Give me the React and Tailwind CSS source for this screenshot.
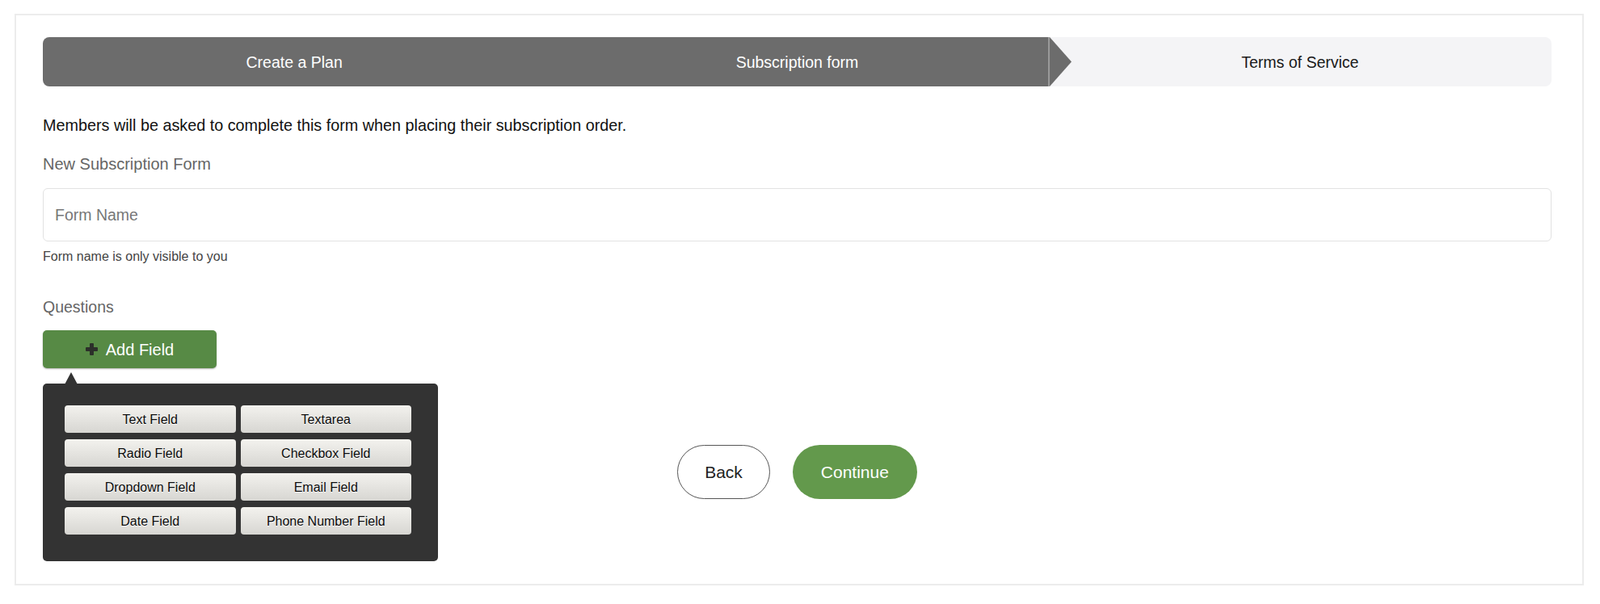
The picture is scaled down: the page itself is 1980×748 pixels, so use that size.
import React from "react";

const fields = [
  "Text Field",
  "Textarea",
  "Radio Field",
  "Checkbox Field",
  "Dropdown Field",
  "Email Field",
  "Date Field",
  "Phone Number Field",
];

export default function App() {
  return (
    <div className="bg-white w-[1980px] h-[748px] pt-[17px] pl-[18px] font-['Liberation_Sans',Arial,Helvetica,sans-serif]">
      <div className="w-[1942px] h-[708px] border-2 border-[#ececec] pl-[33px] pr-[38px] pt-[27px]">
        {/* Stepper */}
        <div className="flex h-[61px] rounded-[8px]">
          <div className="flex-1 flex items-center justify-center pt-[3px] bg-[#6c6c6c] rounded-l-[8px] text-white text-[19.5px]">
            Create a Plan
          </div>
          <div className="flex-1 relative flex items-center justify-center pt-[3px] bg-[#6c6c6c] text-white text-[19.5px]">
            Subscription form
            <svg
              className="absolute top-0 left-[calc(100%-1px)] z-10"
              width="30"
              height="61"
              viewBox="0 0 30 61"
            >
              <rect x="0" y="0" width="2" height="61" fill="#9a9a9a" />
              <polygon points="2,0 29,30.5 2,61" fill="#6c6c6c" />
            </svg>
          </div>
          <div className="flex-1 flex items-center justify-center pt-[3px] bg-[#f4f4f6] rounded-r-[8px] text-[#1a1a1a] text-[19.5px]">
            Terms of Service
          </div>
        </div>

        <p className="mt-[36px] text-[19.8px] leading-[24px] text-[#111]">
          Members will be asked to complete this form when placing their subscription order.
        </p>
        <p className="mt-[24px] text-[20px] leading-[24px] text-[#666]">New Subscription Form</p>

        <input
          readOnly
          placeholder="Form Name"
          className="mt-[18px] block w-full h-[66px] rounded-[6px] border border-[#e2e2e2] pl-[14px] text-[19.5px] outline-none placeholder:text-[#777]"
        />
        <p className="mt-[9px] text-[16px] leading-[20px] text-[#444]">Form name is only visible to you</p>

        <p className="mt-[40px] text-[19.5px] leading-[24px] text-[#666]">Questions</p>

        <div className="relative mt-[17px]">
          <button className="flex items-center justify-center gap-[10px] w-[215px] h-[47px] rounded-[5px] bg-[#578a45] shadow-[0_1px_2px_rgba(0,0,0,0.3)] text-white text-[20px]">
            <svg width="15" height="15" viewBox="0 0 15 15">
              <rect x="5" y="0" width="5" height="15" rx="1" fill="#2c2f2a" />
              <rect x="0" y="5" width="15" height="5" rx="1" fill="#2c2f2a" />
            </svg>
            Add Field
          </button>

          {/* Popover */}
          <div className="absolute left-0 top-[66px] z-20 w-[489px] h-[220px] rounded-[5px] bg-[#333333] pl-[27px] pt-[27px] pr-[33px] pb-[33px]">
            <svg className="absolute -top-[14px] left-[27px]" width="16" height="15" viewBox="0 0 16 15">
              <polygon points="8,0 16,15 0,15" fill="#333333" />
            </svg>
            <div className="grid grid-cols-2 gap-x-[6px] gap-y-[8px]">
              {fields.map((f) => (
                <div
                  key={f}
                  className="h-[34px] flex items-center justify-center pt-[1px] rounded-[4px] bg-linear-to-b from-[#f3f2ee] to-[#d7d6d2] text-[16px] text-[#0a0a0a] [text-shadow:0_1px_0_#ffffff]"
                >
                  {f}
                </div>
              ))}
            </div>
          </div>
        </div>

        <div className="mt-[95px] flex justify-center gap-[28px]">
          <button className="h-[67px] px-[33px] rounded-full border border-[#555] bg-white text-[21px] text-[#222]">
            Back
          </button>
          <button className="h-[67px] px-[35px] rounded-full bg-[#63994c] text-[21px] text-white">
            Continue
          </button>
        </div>
      </div>
    </div>
  );
}
